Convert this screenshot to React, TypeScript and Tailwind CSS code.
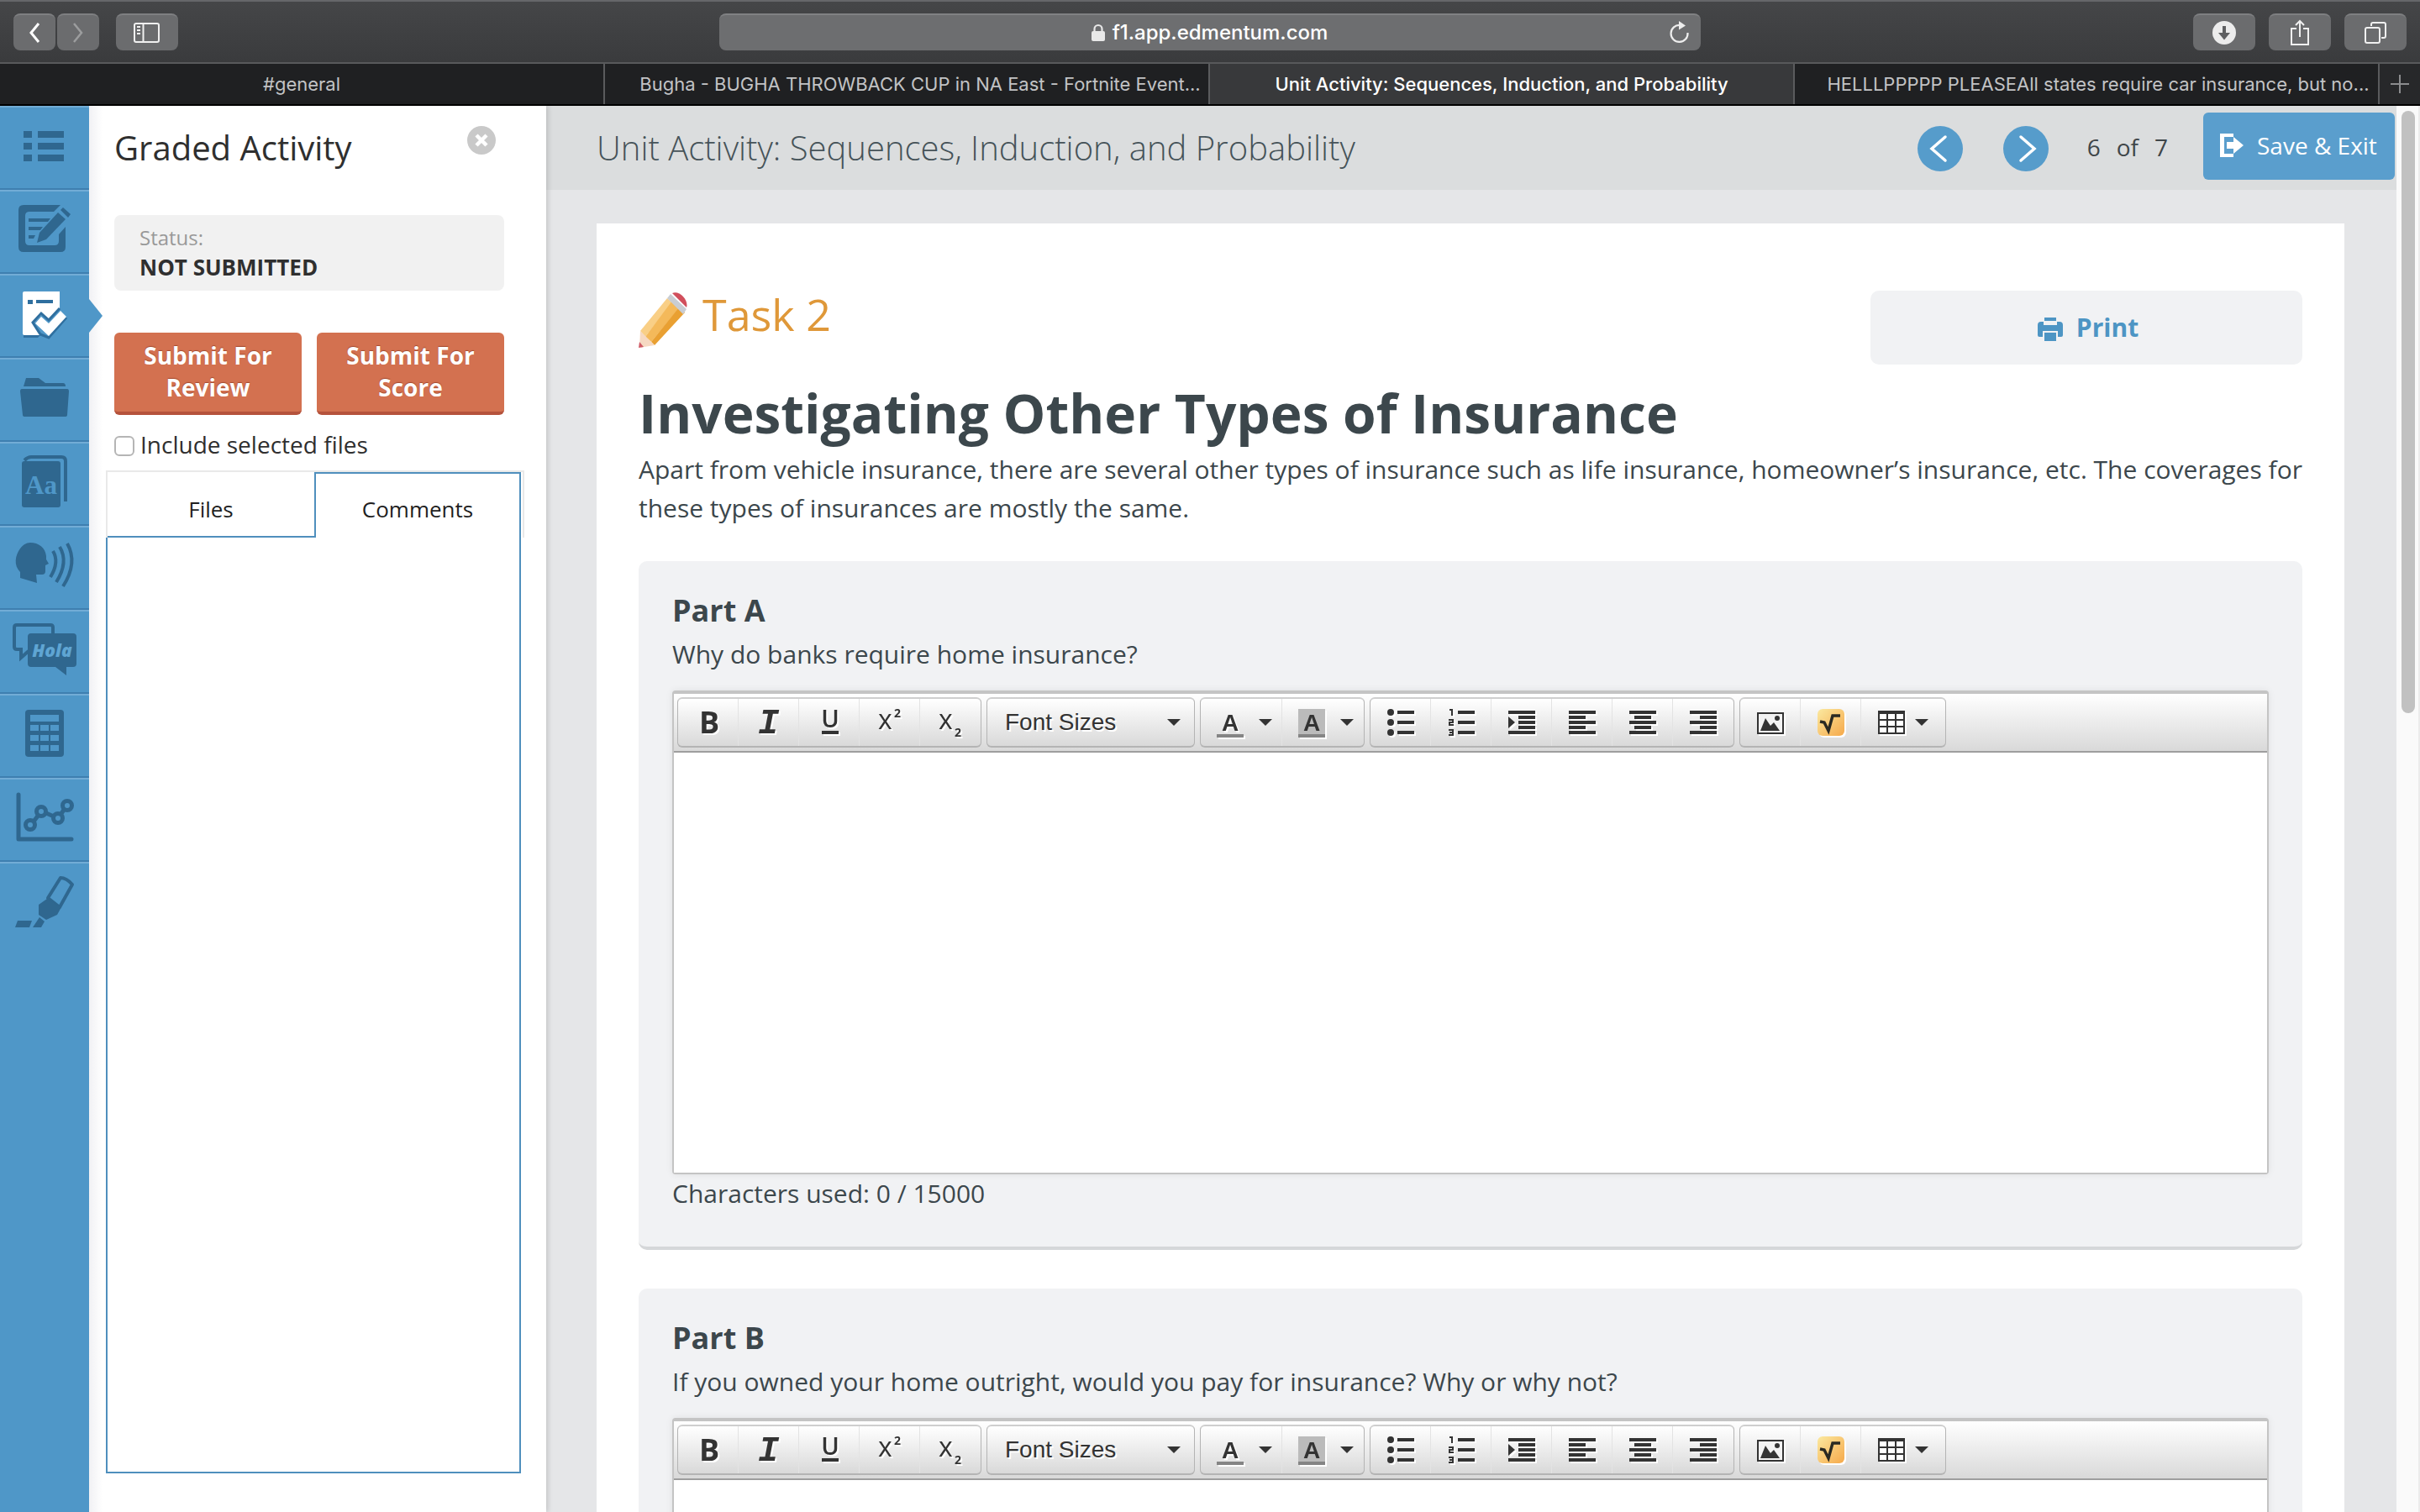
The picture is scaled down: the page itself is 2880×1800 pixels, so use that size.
import React from "react";

const INK = "#2f678f";

function Caret({ className = "" }: { className?: string }) {
  return (
    <svg viewBox="0 0 16 8" className={`h-2 w-4 shrink-0 ${className}`} aria-hidden="true">
      <path d="M0 0h16L8 8z" fill="#333" />
    </svg>
  );
}

/* ---------- Browser chrome ---------- */

const chromeButton =
  "flex h-11 items-center justify-center border-t-2 border-[#7e7f81] bg-[#6b6c6e]";

function BrowserBar() {
  return (
    <div className="flex h-[76px] shrink-0 items-center justify-between border-t-2 border-b-2 border-t-[#66676a] border-b-[#58595b] bg-linear-to-b from-[#454648] to-[#3a3b3d] px-4">
      <div className="flex flex-1 items-center">
        <button aria-label="Back" className={`${chromeButton} w-[50px] rounded-lg`}>
          <svg viewBox="0 0 14 26" className="h-[26px] w-[14px]" fill="none" stroke="#fff" strokeWidth="3">
            <path d="M12 2L3 13l9 11" />
          </svg>
        </button>
        <button aria-label="Forward" className={`${chromeButton} ml-0.5 w-[50px] rounded-lg`}>
          <svg viewBox="0 0 14 26" className="h-[26px] w-[14px]" fill="none" stroke="#9c9d9e" strokeWidth="2.5">
            <path d="M2 2l9 11-9 11" />
          </svg>
        </button>
        <button aria-label="Show sidebar" className={`${chromeButton} ml-5 w-[74px] rounded-lg`}>
          <svg viewBox="0 0 32 26" className="h-[26px] w-8" fill="none" stroke="#f0f0f0" strokeWidth="2">
            <rect x="1" y="2" width="29" height="22" rx="2" />
            <path d="M11.500 2v22M4 6h4M4 10h4M4 14h4" />
          </svg>
        </button>
      </div>
      <div className="flex h-11 w-[41%] items-center rounded-lg border-t-2 border-[#808183] bg-[#6d6e70] px-3 text-white">
        <div className="flex flex-1 items-center justify-center gap-2 pl-6">
          <svg viewBox="0 0 18 22" className="h-[22px] w-[18px]" aria-hidden="true">
            <path d="M4.500 10V6.500a4.500 4.500 0 019 0V10" fill="none" stroke="#e8e8e8" strokeWidth="2.200" />
            <rect x="1" y="9" width="16" height="12" rx="2" fill="#e8e8e8" />
          </svg>
          <span className="text-[24px] leading-8 font-medium">f1.app.edmentum.com</span>
        </div>
        <button aria-label="Reload">
          <svg viewBox="0 0 26 28" className="h-7 w-[26px]" fill="none" stroke="#ededed" strokeWidth="2.200">
            <path d="M22.500 14a10 10 0 11-9-9" />
            <path d="M12 0l8 5.500L12 10.500z" fill="#ededed" stroke="none" />
          </svg>
        </button>
      </div>
      <div className="flex flex-1 items-center justify-end gap-4">
        <button aria-label="Downloads" className={`${chromeButton} w-[74px] rounded-lg`}>
          <svg viewBox="0 0 28 28" className="size-7">
            <circle cx="14" cy="14" r="14" fill="#ececec" />
            <path d="M14 6v11" stroke="#5f6062" strokeWidth="4" />
            <path d="M7 14h14l-7 8.500z" fill="#5f6062" />
          </svg>
        </button>
        <button aria-label="Share" className={`${chromeButton} w-[74px] rounded-lg`}>
          <svg viewBox="0 0 24 32" className="h-8 w-6" fill="none" stroke="#f0f0f0" strokeWidth="2">
            <path d="M8 11H2v19h20V11h-6M12 21V2M7 7l5-5 5 5" />
          </svg>
        </button>
        <button aria-label="Show all tabs" className={`${chromeButton} w-[74px] rounded-lg`}>
          <svg viewBox="0 0 26 26" className="size-[26px]" fill="none" stroke="#f0f0f0" strokeWidth="2">
            <rect x="1" y="7" width="17" height="18" rx="2" />
            <path d="M8 5V3a2 2 0 012-2h13a2 2 0 012 2v14a2 2 0 01-2 2h-3" />
          </svg>
        </button>
      </div>
    </div>
  );
}

function TabBar() {
  const idle = "bg-[#1f2022] text-[#c2c3c5] border-[#5a5b5d] font-normal";
  const cell = "flex min-w-0 items-center justify-center border-r-2 whitespace-nowrap";
  return (
    <div
      role="tablist"
      className="grid h-[50px] shrink-0 grid-cols-[720fr_720fr_696fr_696fr_48px] border-b-2 border-black text-[22px] leading-8 font-medium"
    >
      <button role="tab" className={`${cell} ${idle}`}>#general</button>
      <button role="tab" className={`${cell} ${idle} pl-8`}>
        Bugha - BUGHA THROWBACK CUP in NA East - Fortnite Event...
      </button>
      <button role="tab" aria-selected="true" className={`${cell} border-[#5a5b5d] bg-[#38393b] text-white`}>
        Unit Activity: Sequences, Induction, and Probability
      </button>
      <button role="tab" className={`${cell} ${idle} pl-7`}>
        HELLLPPPPP PLEASEAll states require car insurance, but no...
      </button>
      <button aria-label="New tab" className="flex items-center justify-center bg-[#27282a]">
        <svg viewBox="0 0 22 22" className="size-[22px]" stroke="#8b8c8e" strokeWidth="2">
          <path d="M11 0v22M0 11h22" />
        </svg>
      </button>
    </div>
  );
}

/* ---------- Tool rail ---------- */

const rail: { label: string; active?: boolean; art: React.ReactNode }[] = [
  {
    label: "Contents",
    art: (
      <path d="M28 30h10v8H28zM45 30h31v8H45zM28 44h10v8H28zM45 44h31v8H45zM28 58h10v8H28zM45 58h31v8H45z" fill={INK} />
    ),
  },
  {
    label: "Notes",
    art: (
      <g fill={INK}>
        <path d="M28 18H72L64 26H35q-5 0-5 5v30q0 5 5 5h30q5 0 5-5V53l8-9v24q0 6-6 6H28q-6 0-6-6V24q0-6 6-6z" />
        <path d="M34 34h26l-3 4H34zM34 44h17l-3 4H34zM34 54h8l-2 4h-6z" />
        <path d="M44 63l3-12 22-24 9 8-23 24z" />
        <path d="M72 24l3-3 9 8-3 4z" />
      </g>
    ),
  },
  {
    label: "Graded Activity",
    active: true,
    art: (
      <g>
        <path d="M28 73h20l-3 3H28z" fill="#2f6f9f" />
        <path d="M29 21h42v20L58 55l-8-7-11 12 9 12v1H29q-2 0-2-2V23q0-2 2-2z" fill="#fff" />
        <path d="M33 31h6v5h-6zM43 31h20v4H43z" fill="#2f6f9f" />
        <path d="M71 41L58 55l-9-8-10 11 9 14 10 4 21-24" fill="none" stroke="#2f6f9f" strokeWidth="3" />
        <path d="M42 59l7-8 9 8 14-15 7 7-21 23z" fill="#fff" />
      </g>
    ),
  },
  {
    label: "Folder",
    art: (
      <g fill={INK}>
        <path d="M31 24h15l8 6h21q3 0 3 4H28z" />
        <path d="M26 37h54q2 0 2 3l-2 28q0 2-3 2H30q-3 0-3-2l-3-28q0-3 2-3z" />
      </g>
    ),
  },
  {
    label: "Dictionary",
    art: (
      <g>
        <path d="M29 22q4-4 8-4h36q5 0 5 5v48" fill="none" stroke={INK} strokeWidth="4" />
        <rect x="26" y="23" width="46" height="55" rx="3" fill={INK} />
        <text x="49" y="62" textAnchor="middle" fontFamily="Liberation Serif" fontWeight="700" fontSize="31" fill="#4f97c8">Aa</text>
      </g>
    ),
  },
  {
    label: "Read aloud",
    art: (
      <g>
        <path d="M36 20c10 0 18 6 19 16v4l3 5-4 2v7q0 4-4 4h-7l1 10-20-6V55c-8-8-6-20 0-28 3-4 7-7 12-7z" fill={INK} />
        <path d="M63 30q8 13-3 31M71 25q11 18-4 42M80 21q13 23-5 51" fill="none" stroke={INK} strokeWidth="4" />
      </g>
    ),
  },
  {
    label: "Translate",
    art: (
      <g>
        <path d="M63 28v-7q0-3-3-3H20q-3 0-3 3v23q0 3 3 3h5v10l9-8" fill="none" stroke={INK} strokeWidth="4" />
        <path d="M37 28h50q4 0 4 4v32q0 4-4 4h-8v10L66 68H37q-4 0-4-4V32q0-4 4-4z" fill={INK} />
        <text x="62" y="56" textAnchor="middle" fontFamily="Open Sans" fontWeight="800" fontStyle="italic" fontSize="21" fill="#5fa5d3">Hola</text>
      </g>
    ),
  },
  {
    label: "Calculator",
    art: (
      <g>
        <rect x="30" y="19" width="46" height="56" rx="4" fill={INK} />
        <path
          d="M36 25h34v8H36zM36 37h10v7H36zM48 37h10v7H48zM60 37h10v7H60zM36 49h10v7H36zM48 49h10v7H48zM60 49h10v7H60zM36 61h10v7H36zM48 61h10v7H48zM60 61h10v7H60z"
          fill="#4f97c8"
        />
      </g>
    ),
  },
  {
    label: "Graph",
    art: (
      <g fill="none" stroke={INK}>
        <path d="M22 20v53h63" strokeWidth="5" strokeLinejoin="round" strokeLinecap="round" />
        <path d="M40 52l6-8M55 42l9 4M72 44l4-6" strokeWidth="5" />
        <g strokeWidth="5">
          <circle cx="36" cy="56" r="5.500" />
          <circle cx="49" cy="40" r="5.500" />
          <circle cx="69" cy="48" r="5.500" />
          <circle cx="80" cy="33" r="5.500" />
        </g>
      </g>
    ),
  },
  {
    label: "Highlighter",
    art: (
      <g fill={INK}>
        <path d="M57 43l15-24q7 0 14 8L71 54z" fill="none" stroke={INK} strokeWidth="4" strokeLinejoin="round" />
        <path d="M56 44l17 10-5 9-13 6-9-6v-12z" />
        <path d="M47 66l6 5-4 7H39z" />
        <path d="M21 70h17l-3 8H18z" />
      </g>
    ),
  },
];

function Rail() {
  return (
    <nav aria-label="Tools" className="relative z-10 w-[106px] shrink-0 bg-[#4f97c8]">
      {rail.map((item) => (
        <button
          key={item.label}
          aria-label={item.label}
          className="relative block h-[100px] w-full shadow-[inset_0_-2px_#3f7fb0,inset_0_2px_#72acd6] last:shadow-[inset_0_2px_#72acd6]"
        >
          <svg viewBox="0 0 106 100" className="block h-[100px] w-[106px]">{item.art}</svg>
          {item.active && (
            <svg viewBox="0 0 16 40" className="absolute top-[30px] left-full h-10 w-4">
              <path d="M0 0l16 20L0 40z" fill="#4f97c8" />
            </svg>
          )}
        </button>
      ))}
    </nav>
  );
}

/* ---------- Graded activity panel ---------- */

function Panel() {
  const submit =
    "flex-1 rounded-md border-b-4 border-[#b5533c] bg-[#d37150] px-6 pt-2 pb-2.5 text-[28px] leading-[38px] font-bold text-white [text-shadow:0_-1px_1px_#a24a30]";
  return (
    <aside className="z-[5] flex w-[544px] shrink-0 flex-col bg-white bg-linear-to-r from-[#f1f1f4] via-white via-3% to-white pt-[22px] pr-[50px] pb-[46px] pl-[30px] text-[#2f2f2f] shadow-[2px_0_6px_rgba(0,0,0,0.15)]">
      <div className="flex items-start justify-between">
        <h2 className="text-[40px] leading-[56px]">Graded Activity</h2>
        <button aria-label="Close" className="mt-0.5 mr-2.5">
          <svg viewBox="0 0 34 34" className="size-[34px]">
            <circle cx="17" cy="17" r="17" fill="#c9c9c9" />
            <path d="M11 11l12 12M23 11L11 23" stroke="#fff" strokeWidth="4.500" />
          </svg>
        </button>
      </div>
      <div className="mt-[52px] rounded-lg bg-[#f1f1f1] px-[30px] pt-2.5 pb-2.5 text-[24px] leading-[34px]">
        <p className="text-[#999]">Status:</p>
        <p className="text-[26px] leading-9 font-bold">NOT SUBMITTED</p>
      </div>
      <div className="mt-[50px] flex gap-[18px]">
        <button className={submit}>Submit For Review</button>
        <button className={submit}>Submit For Score</button>
      </div>
      <label className="mt-4 flex items-center gap-[7px] text-[28px] leading-[38px]">
        <input
          type="checkbox"
          className="mt-1 size-6 appearance-none rounded-md border-2 border-[#b5b5b5] bg-white checked:bg-[#4f97c8]"
        />
        Include selected files
      </label>
      <div className="mt-3 -mr-6 -ml-2.5 flex border-2 border-b-0 border-[#e9e9e9] text-[26px] leading-[38px] text-[#1f1f1f]" role="tablist">
        <button role="tab" className="h-[78px] flex-1 border-b-2 border-[#4f8fbd] pt-3">Files</button>
        <button role="tab" aria-selected="true" className="mr-0.5 h-[78px] w-[246px] border-2 border-b-0 border-[#4f8fbd] bg-white pt-2">
          Comments
        </button>
      </div>
      <div role="tabpanel" className="-mr-5 -ml-2.5 flex-1 border-2 border-t-0 border-[#4f8fbd]" />
    </aside>
  );
}

/* ---------- Rich text editor ---------- */

function Glyph({ children }: { children: React.ReactNode }) {
  return (
    <svg
      viewBox="0 0 32 32"
      className="size-8 shrink-0 overflow-visible drop-shadow-[2px_2px_0_#ffffff]"
      fill="#333"
      fontFamily="Open Sans"
      aria-hidden="true"
    >
      {children}
    </svg>
  );
}

const groupCls =
  "flex h-[60px] overflow-hidden rounded-md border border-y-2 border-[#b4b4b4] border-t-[#cfcfcf] bg-linear-to-b from-white to-[#d9d9d9]";

function Tool({ label, wide, children }: { label: string; wide?: boolean; children: React.ReactNode }) {
  return (
    <button
      aria-label={label}
      className={
        "flex items-center border-r border-[#e3e3e3] last:border-r-0 " +
        (wide ? "w-[97px] pl-[19px]" : "w-[72px] justify-center")
      }
    >
      {children}
    </button>
  );
}

function Toolbar({ id }: { id: string }) {
  return (
    <div role="toolbar" className="flex h-[70px] items-start gap-1.5 border-b-2 border-[#9e9e9e] bg-linear-to-b from-white to-[#d9d9d9] px-1 pt-1">
      <div className={groupCls}>
        <Tool label="Bold">
          <Glyph><text x="5" y="29" fontSize="36" fontWeight="700">B</text></Glyph>
        </Tool>
        <Tool label="Italic">
          <Glyph><text x="3" y="29" fontSize="42" fontWeight="700" fontStyle="italic" fontFamily="Liberation Mono">I</text></Glyph>
        </Tool>
        <Tool label="Underline">
          <Glyph>
            <text x="17" y="22" fontSize="29" fontWeight="600" textAnchor="middle">U</text>
            <path d="M7 26h20v4H7z" />
          </Glyph>
        </Tool>
        <Tool label="Superscript">
          <Glyph>
            <text x="2" y="24" fontSize="32" fontWeight="400">x</text>
            <text x="21" y="10" fontSize="14" fontWeight="700">2</text>
          </Glyph>
        </Tool>
        <Tool label="Subscript">
          <Glyph>
            <text x="2" y="24" fontSize="32" fontWeight="400">x</text>
            <text x="21" y="33" fontSize="14" fontWeight="700">2</text>
          </Glyph>
        </Tool>
      </div>
      <div className={`${groupCls} relative w-[248px] items-center`}>
        <select
          id={id}
          aria-label="Font Sizes"
          className="h-full w-full appearance-none bg-transparent pl-[21px] font-['Liberation_Sans',Arial,sans-serif] text-[28px] text-[#333] [text-shadow:2px_2px_0_#fff]"
        >
          <option>Font Sizes</option>
        </select>
        <Caret className="pointer-events-none absolute right-4" />
      </div>
      <div className={groupCls}>
        <Tool label="Text color" wide>
          <Glyph>
            <text x="16" y="26" fontSize="28" fontWeight="700" textAnchor="middle" fontFamily="Liberation Sans">A</text>
            <path d="M0 30h32v4H0z" fill="#858585" />
          </Glyph>
          <Caret className="ml-[18px]" />
        </Tool>
        <Tool label="Background color" wide>
          <Glyph>
            <path d="M0 0h32v34H0z" fill="#bbb" />
            <text x="16" y="26" fontSize="28" fontWeight="700" textAnchor="middle" fontFamily="Liberation Sans">A</text>
            <path d="M0 30h32v4H0z" fill="#858585" />
          </Glyph>
          <Caret className="ml-[18px]" />
        </Tool>
      </div>
      <div className={groupCls}>
        <Tool label="Bullet list">
          <Glyph>
            <circle cx="4" cy="4" r="4" />
            <circle cx="4" cy="16" r="4" />
            <circle cx="4" cy="28" r="4" />
            <path d="M12 2h20v4H12zM12 14h20v4H12zM12 26h20v4H12z" />
          </Glyph>
        </Tool>
        <Tool label="Numbered list">
          <Glyph>
            <path d="M12 2h20v4H12zM12 14h20v4H12zM12 26h20v4H12z" />
            <path d="M2 1h3v7M1 13h5v3H2v3h5M1 25h5v6H1M2 28h4" fill="none" stroke="#333" strokeWidth="2" />
          </Glyph>
        </Tool>
        <Tool label="Increase indent">
          <Glyph><path d="M0 2h32v4H0zM12 8h20v4H12zM12 14h20v4H12zM12 20h20v4H12zM0 26h32v4H0zM0 9l8 7-8 7z" /></Glyph>
        </Tool>
        <Tool label="Align left">
          <Glyph><path d="M0 2h32v4H0zM0 8h20v4H0zM0 14h32v4H0zM0 20h20v4H0zM0 26h32v4H0z" /></Glyph>
        </Tool>
        <Tool label="Align center">
          <Glyph><path d="M0 2h32v4H0zM6 8h20v4H6zM0 14h32v4H0zM6 20h20v4H6zM0 26h32v4H0z" /></Glyph>
        </Tool>
        <Tool label="Align right">
          <Glyph><path d="M0 2h32v4H0zM12 8h20v4H12zM0 14h32v4H0zM12 20h20v4H12zM0 26h32v4H0z" /></Glyph>
        </Tool>
      </div>
      <div className={groupCls}>
        <Tool label="Insert image">
          <Glyph>
            <path d="M1 5h30v24H1z" fill="#f2f2f2" stroke="#333" strokeWidth="2" />
            <path d="M4 26l6-15 6 9 4-4 7 10z" />
            <circle cx="24" cy="11" r="3" />
          </Glyph>
        </Tool>
        <Tool label="Insert equation">
          <Glyph>
            <defs>
              <linearGradient id={`${id}-eq`} x1="0" y1="0" x2="1" y2="1">
                <stop offset="0" stopColor="#fbe9a0" />
                <stop offset="1" stopColor="#f6a94a" />
              </linearGradient>
            </defs>
            <rect width="32" height="32" rx="6" fill={`url(#${id}-eq)`} />
            <path d="M3 15l5 1 5 10 5-18h9" fill="none" stroke="#2a2a22" strokeWidth="3.500" />
          </Glyph>
        </Tool>
        <button aria-label="Insert table" className="flex items-center pr-4 pl-5">
          <Glyph>
            <path d="M1 5h30v24H1z" fill="#fff" />
            <path d="M0 2h32v28H0zM2 6v6h8V6zM12 6v6h8V6zM22 6v6h8V6zM2 14v6h8v-6zM12 14v6h8v-6zM22 14v6h8v-6zM2 22v6h8v-6zM12 22v6h8v-6zM22 22v6h8v-6z" fillRule="evenodd" />
          </Glyph>
          <Caret className="mr-1 ml-3" />
        </button>
      </div>
    </div>
  );
}

function Part({ name, question }: { name: string; question: string }) {
  const id = name.toLowerCase().replace(" ", "-");
  return (
    <section className="mb-[46px] rounded-[10px] border-b-4 border-[#d5d7d9] bg-[#f1f2f4] px-10 pt-[34px] pb-10">
      <h2 className="text-[36px] leading-[50px] font-bold">{name}</h2>
      <label htmlFor={`${id}-answer`} className="mt-1 block">{question}</label>
      <div className="mt-5 rounded-sm border-2 border-t-4 border-[#c4c4c4] bg-white shadow-[0_0_8px_rgba(0,0,0,0.08)]">
        <Toolbar id={`${id}-size`} />
        <textarea id={`${id}-answer`} className="block h-[500px] w-full resize-none bg-white p-4 outline-none" />
      </div>
      <p>Characters used: 0 / 15000</p>
    </section>
  );
}

function Content() {
  return (
    <main className="flex min-w-0 flex-1 flex-col bg-[#e5e6e8]">
      <header className="flex h-[100px] shrink-0 items-start bg-[#dbddde] pr-0.5 pl-[60px]">
        <h1 className="flex-1 pt-[22px] text-[40px] leading-[56px] font-light text-[#465359]">
          Unit Activity: Sequences, Induction, and Probability
        </h1>
        <div className="flex gap-12 pt-6">
          <button aria-label="Previous">
            <svg viewBox="0 0 54 54" className="size-[54px]">
              <circle cx="27" cy="27" r="27" fill="#569ccb" />
              <path d="M33 13L17 27l16 14" fill="none" stroke="#fff" strokeWidth="3.500" strokeLinecap="round" />
            </svg>
          </button>
          <button aria-label="Next">
            <svg viewBox="0 0 54 54" className="size-[54px]">
              <circle cx="27" cy="27" r="27" fill="#569ccb" />
              <path d="M21 13l16 14-16 14" fill="none" stroke="#fff" strokeWidth="3.500" strokeLinecap="round" />
            </svg>
          </button>
        </div>
        <p className="flex gap-[19px] pt-[30px] pr-[42px] pl-[46px] text-[28px] leading-[38px] text-[#3f4649]">
          <span>6</span>
          <span>of</span>
          <span>7</span>
        </p>
        <button className="mt-2 flex h-20 w-[228px] items-center rounded-md bg-[#5a9ecd] pb-0.5 pl-5 text-[28px] text-white">
          <svg viewBox="0 0 28 28" className="mr-4 size-7 shrink-0" fill="#fff">
            <path d="M0 0h16v4H5v20h11v4H0z" />
            <path d="M8 10h8V4l12 10-12 10v-6H8z" />
          </svg>
          <span className="whitespace-nowrap">Save &amp; Exit</span>
        </button>
      </header>
      <div className="min-h-0 flex-1 overflow-y-auto pt-10 pr-[62px] pl-[60px] [scrollbar-width:none]">
        <article className="bg-white px-[50px] pt-20 text-[30px] leading-[46px] text-[#3c474c]">
          <div className="flex items-start justify-between">
            <div className="flex items-start gap-[18px]">
              <svg viewBox="0 0 58 66" className="mt-0.5 h-[66px] w-[58px]" aria-hidden="true">
                <path d="M2 46L34 7l6 5L8 53z" fill="#f9cf86" />
                <path d="M8 53L40 10l9 8-34 41z" fill="#f4b95a" />
                <path d="M15 59l34-42 6 7-36 39z" fill="#e9a032" />
                <path d="M34 7l4-5 19 18-4 6z" fill="#c9cdd3" />
                <path d="M40 1c8-4 20 8 17 17z" fill="#d14f5c" />
                <path d="M2 46l17 17-18 3z" fill="#f6d9c2" />
                <path d="M1 59l5 6-6 1z" fill="#cf5b66" />
              </svg>
              <p className="text-[52px] leading-[56px] text-[#df9839]">Task 2</p>
            </div>
            <button className="flex h-22 w-[514px] items-center justify-center gap-4 rounded-[10px] bg-[#f1f2f4] pl-1 text-[30px] font-bold text-[#4d95c4]">
              <svg viewBox="0 0 30 28" className="mt-1 h-7 w-[30px]" fill="#4d95c4">
                <path d="M8 0h14v4H8zM4 5h3v4h16V5h3q4 0 4 4v12q0 2-2 2h-4v-7H6v7H2q-2 0-2-2V9q0-4 4-4zM8 18h14v10H8z" />
              </svg>
              Print
            </button>
          </div>
          <h1 className="mt-[18px] text-[64px] leading-20 font-bold">Investigating Other Types of Insurance</h1>
          <p className="mt-1 mb-10">
            Apart from vehicle insurance, there are several other types of insurance such as life insurance, homeowner’s
            insurance, etc. The coverages for these types of insurances are mostly the same.
          </p>
          <Part name="Part A" question="Why do banks require home insurance?" />
          <Part name="Part B" question="If you owned your home outright, would you pay for insurance? Why or why not?" />
        </article>
      </div>
    </main>
  );
}

export default function App() {
  return (
    <div className="flex h-screen flex-col overflow-hidden bg-white">
      <div className="font-[Inter,sans-serif]">
        <BrowserBar />
        <TabBar />
      </div>
      <div className="flex min-h-0 flex-1 font-['Open_Sans',sans-serif]">
        <Rail />
        <Panel />
        <Content />
        <div className="w-7 shrink-0 border-r-2 border-[#ececec] bg-[#fafafa] pt-1.5 pl-1.5">
          <div className="h-[43%] w-4 rounded-full bg-[#c1c1c1]" />
        </div>
      </div>
    </div>
  );
}
